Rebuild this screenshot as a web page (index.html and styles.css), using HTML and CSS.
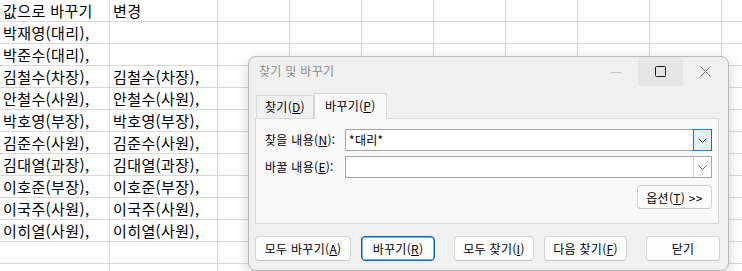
FILE: index.html
```html
<!DOCTYPE html>
<html lang="ko">
<head>
    <meta charset="UTF-8">
    <meta name="viewport" content="width=device-width, initial-scale=1.0">
    <title>찾기 및 바꾸기</title>
    <link rel="stylesheet" href="styles.css">
</head>
<body>
    <div class="sheet">
        <div class="row"><div class="cell">값으로 바꾸기</div><div class="cell col-b">변경</div><div class="rest"></div></div>
        <div class="row"><div class="cell">박재영(대리),</div><div class="cell col-b"></div><div class="rest"></div></div>
        <div class="row"><div class="cell">박준수(대리),</div><div class="cell col-b"></div><div class="rest"></div></div>
        <div class="row"><div class="cell">김철수(차장),</div><div class="cell col-b">김철수(차장),</div><div class="rest"></div></div>
        <div class="row"><div class="cell">안철수(사원),</div><div class="cell col-b">안철수(사원),</div><div class="rest"></div></div>
        <div class="row"><div class="cell">박호영(부장),</div><div class="cell col-b">박호영(부장),</div><div class="rest"></div></div>
        <div class="row"><div class="cell">김준수(사원),</div><div class="cell col-b">김준수(사원),</div><div class="rest"></div></div>
        <div class="row"><div class="cell">김대열(과장),</div><div class="cell col-b">김대열(과장),</div><div class="rest"></div></div>
        <div class="row"><div class="cell">이호준(부장),</div><div class="cell col-b">이호준(부장),</div><div class="rest"></div></div>
        <div class="row"><div class="cell">이국주(사원),</div><div class="cell col-b">이국주(사원),</div><div class="rest"></div></div>
        <div class="row"><div class="cell">이히열(사원),</div><div class="cell col-b">이히열(사원),</div><div class="rest"></div></div>
        <div class="row"><div class="cell"></div><div class="cell col-b"></div><div class="rest"></div></div>
        <div class="row"><div class="cell"></div><div class="cell col-b"></div><div class="rest"></div></div>
    </div>

    <div class="dialog">
        <div class="titlebar">
            <span class="title">찾기 및 바꾸기</span>
            <div class="caption-btns">
                <span class="cap-btn"><svg width="10" height="10" viewBox="0 0 10 10"><path d="M0 5.5h10" stroke="#c4c4c4" stroke-width="1"/></svg></span>
                <span class="cap-btn hover"><svg width="11" height="11" viewBox="0 0 11 11"><rect x="0.5" y="0.5" width="10" height="10" rx="1" fill="none" stroke="#1a1a1a" stroke-width="1"/></svg></span>
                <span class="cap-btn"><svg width="11" height="11" viewBox="0 0 11 11"><path d="M0.5 0.5l10 10M10.5 0.5l-10 10" stroke="#7a7a7a" stroke-width="1"/></svg></span>
            </div>
        </div>

        <div class="tabs">
            <div class="tab">찾기(<u>D</u>)</div>
            <div class="tab active">바꾸기(<u>P</u>)</div>
        </div>

        <div class="panel">
            <div class="field">
                <label>찾을 내용(<u>N</u>):</label>
                <div class="combo">
                    <span class="combo-text">*대리*</span>
                    <span class="drop focused"><svg width="9" height="5" viewBox="0 0 9 5"><path d="M0.5 0.5l4 4 4-4" fill="none" stroke="#444" stroke-width="1"/></svg></span>
                </div>
            </div>
            <div class="field">
                <label>바꿀 내용(<u>E</u>):</label>
                <div class="combo">
                    <span class="combo-text"></span>
                    <span class="drop"><svg width="9" height="5" viewBox="0 0 9 5"><path d="M0.5 0.5l4 4 4-4" fill="none" stroke="#666" stroke-width="1"/></svg></span>
                </div>
            </div>
            <div class="options-row">
                <button class="btn btn-options">옵션(<u>T</u>) &gt;&gt;</button>
            </div>
        </div>

        <div class="actions">
            <button class="btn w96">모두 바꾸기(<u>A</u>)</button>
            <button class="btn btn-default w74 gap-s">바꾸기(<u>R</u>)</button>
            <button class="btn w80 gap-l">모두 찾기(<u>I</u>)</button>
            <button class="btn w83 gap-s">다음 찾기(<u>F</u>)</button>
            <button class="btn w74 gap-l">닫기</button>
        </div>
    </div>
</body>
</html>
```

FILE: styles.css
```css
body {
    margin: 0;
    overflow: hidden;
    background: #fff;
    font-family: "Noto Sans CJK KR", "Noto Sans", sans-serif;
}

/* spreadsheet */
.sheet {
    width: 742px;
    height: 271px;
    overflow: hidden;
}
.row {
    display: flex;
    height: 22px;
    box-sizing: border-box;
    border-bottom: 1px solid #d9d9d9;
}
.cell {
    width: 110px;
    box-sizing: border-box;
    border-right: 1px solid #d9d9d9;
    padding-left: 3px;
    font-size: 15px;
    line-height: 21px;
    letter-spacing: 0.4px;
    color: #000;
    white-space: nowrap;
}
.col-b {
    width: 108px;
}
.rest {
    flex: 1;
    background: repeating-linear-gradient(to right, transparent 0 71px, #d9d9d9 71px 72px);
}

/* dialog window */
.dialog {
    position: absolute;
    left: 248px;
    top: 56px;
    width: 481px;
    height: 215px;
    box-sizing: border-box;
    background: #f0f0f0;
    border: 1px solid #b9b9b9;
    border-radius: 8px;
    box-shadow: 0 4px 14px rgba(0, 0, 0, 0.18);
    font-size: 12px;
    letter-spacing: 0.3px;
    color: #1a1a1a;
    overflow: hidden;
}
.titlebar {
    display: flex;
    justify-content: space-between;
    height: 29px;
}
.title {
    padding-left: 10px;
    line-height: 27px;
    color: #8c8c8c;
}
.caption-btns {
    display: flex;
}
.cap-btn {
    width: 45px;
    height: 29px;
    display: flex;
    align-items: center;
    justify-content: center;
}
.cap-btn.hover {
    background: #e6e6e6;
}

.tabs {
    display: flex;
    align-items: flex-end;
    height: 25px;
    margin: 7px 0 0 7px;
    position: relative;
    z-index: 1;
}
.tab {
    height: 23px;
    box-sizing: border-box;
    padding: 0 8px;
    line-height: 22px;
    border: 1px solid #d9d9d9;
    border-bottom: none;
    background: #f0f0f0;
    color: #000;
}
.tab.active {
    height: 26px;
    margin-bottom: -1px;
    padding: 0 10px;
    line-height: 24px;
    background: #f9f9f9;
}

.panel {
    width: 464px;
    height: 106px;
    box-sizing: border-box;
    margin-left: 6px;
    padding: 10px 6px 0 9px;
    background: #f9f9f9;
    border: 1px solid #d9d9d9;
}
.field {
    display: flex;
    height: 22px;
    margin-bottom: 5px;
}
.field label {
    width: 80px;
    line-height: 22px;
    color: #000;
}
.combo {
    display: flex;
    width: 367px;
    height: 22px;
    box-sizing: border-box;
    border: 1px solid #a6a6a6;
    background: #fff;
}
.combo-text {
    flex: 1;
    padding-left: 3px;
    line-height: 20px;
    color: #000;
}
.drop {
    width: 17px;
    display: flex;
    align-items: center;
    justify-content: center;
    border-left: 1px solid #d4d4d4;
    background: #fff;
}
.drop.focused {
    margin: -1px -1px -1px 0;
    border: 1px solid #0078d4;
    background: #e5f1fb;
}
.options-row {
    display: flex;
    justify-content: flex-end;
    margin-top: 7px;
}

.btn {
    height: 25px;
    box-sizing: border-box;
    padding: 0;
    font-family: inherit;
    font-size: 12px;
    letter-spacing: 0.3px;
    color: #000;
    background: #fdfdfd;
    border: 1px solid #d3d3d3;
    border-bottom-color: #c4c4c4;
    border-radius: 4px;
}
.btn-options {
    width: 75px;
    height: 24px;
}
.btn-default {
    border: 1px solid #0067c0;
    box-shadow: inset 0 0 0 0.5px #0067c0;
}
.actions {
    display: flex;
    margin: 12px 0 0 6px;
}
.w96 { width: 96px; }
.w74 { width: 74px; }
.w80 { width: 80px; }
.w83 { width: 83px; }
.gap-s { margin-left: 10px; }
.gap-l { margin-left: 19px; }
```
